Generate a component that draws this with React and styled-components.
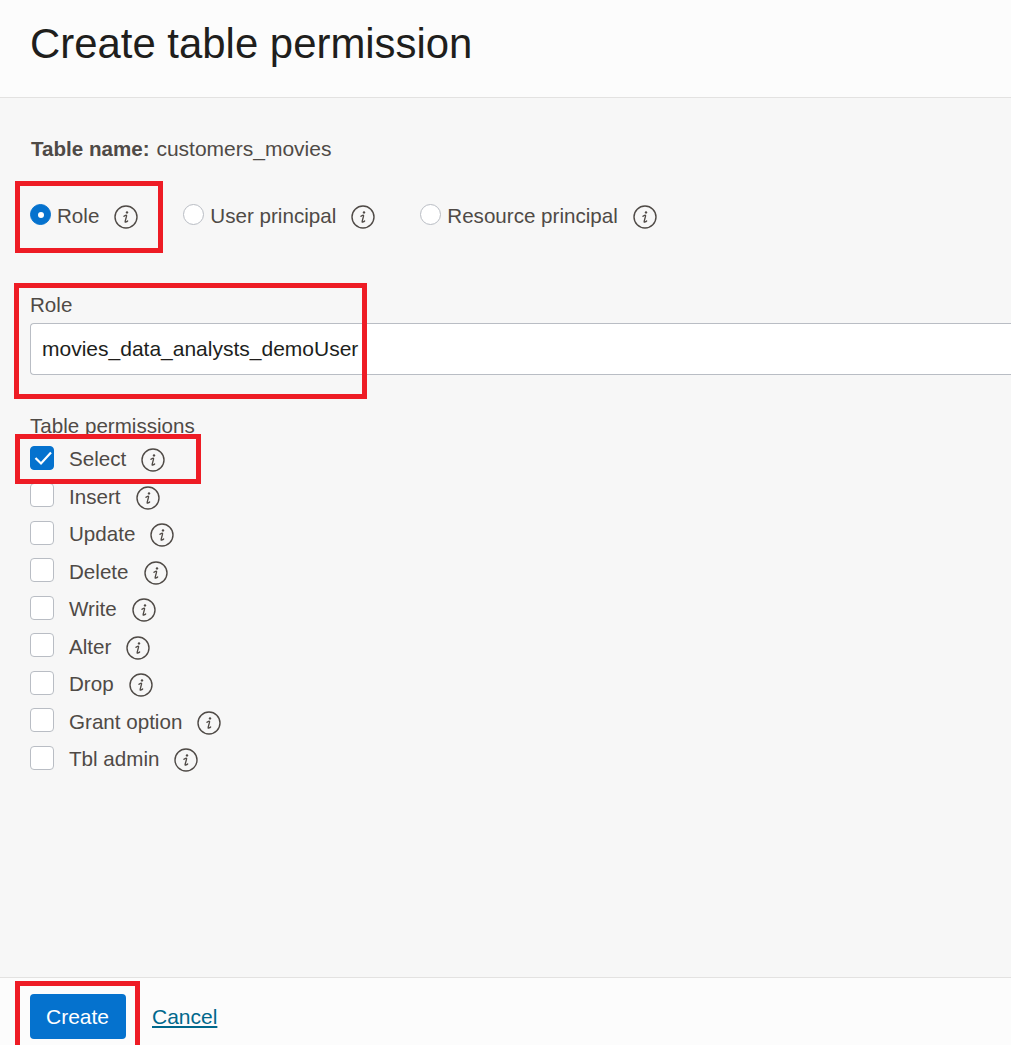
import React from 'react'
import styled, { createGlobalStyle } from 'styled-components'

const GlobalStyle = createGlobalStyle`
  html, body {
    margin: 0;
    padding: 0;
    height: 100%;
    overflow: hidden;
  }
  body {
    font-family: "Liberation Sans", Arial, sans-serif;
    color: #4f4a46;
  }
`

const Page = styled.div`
  position: relative;
  width: 1011px;
  height: 1045px;
  display: flex;
  flex-direction: column;
  background: #f7f7f7;
  overflow: hidden;
`

const Header = styled.header`
  flex: none;
  display: flex;
  align-items: center;
  padding: 0 30px 9px;
  height: 88px;
  background: #fcfcfc;
  border-bottom: 1px solid #e3e2e1;
`

const Title = styled.h1`
  margin: 0;
  font-size: 41.9px;
  font-weight: 400;
  color: #201e1c;
`

const Body = styled.main`
  flex: 1;
  padding: 39px 0 0 30px;
  font-size: 20.6px;
  line-height: 24px;
`

const TableName = styled.div`
  height: 24px;
  margin-bottom: 43px;
  padding-left: 1px;
`

const TableValue = styled.span`
  font-size: 21px;
  margin-left: 1px;
`

const RadioRow = styled.div`
  display: flex;
  height: 24px;
  margin-bottom: 65px;
`

const RadioOption = styled.label`
  display: flex;
  align-items: center;
  margin-right: ${p => p.$gap}px;
`

const Radio = styled.span`
  width: 21px;
  height: 21px;
  box-sizing: border-box;
  border-radius: 50%;
  margin: -3px 6px 0 0;
  display: flex;
  align-items: center;
  justify-content: center;
  background: ${p => (p.$checked ? '#0572ce' : '#fff')};
  border: 1px solid ${p => (p.$checked ? '#0572ce' : '#b9bdc4')};

  &::after {
    content: "";
    display: ${p => (p.$checked ? 'block' : 'none')};
    width: 6px;
    height: 6px;
    border-radius: 50%;
    background: #fff;
  }
`

const InfoIcon = styled.svg`
  width: 24px;
  height: 24px;
  flex: none;
  margin: 2px 0 0 15px;
`

const FieldLabel = styled.div`
  height: 24px;
  margin-bottom: 6px;
`

const RoleInput = styled.div`
  height: 52px;
  box-sizing: border-box;
  margin-bottom: 40px;
  padding: 0 11px;
  display: flex;
  align-items: center;
  background: #fff;
  border: 1px solid #b9bdc4;
  border-right: none;
  border-radius: 4px 0 0 4px;
  color: #201e1c;
  font-size: 21px;
`

const GroupLabel = styled.div`
  height: 25.4px;
  line-height: 22px;
`

const CheckList = styled.div`
  display: flex;
  flex-direction: column;
`

const CheckRow = styled.label`
  display: flex;
  align-items: center;
  height: 37.5px;
`

const Box = styled.span`
  width: 24px;
  height: 24px;
  box-sizing: border-box;
  border-radius: 4px;
  margin: -2.4px 15px 0 0;
  display: flex;
  align-items: center;
  justify-content: center;
  background: ${p => (p.$checked ? '#0572ce' : '#fff')};
  border: 1px solid ${p => (p.$checked ? '#0572ce' : '#b9bdc4')};
`

const Footer = styled.footer`
  height: 68px;
  flex: none;
  display: flex;
  align-items: flex-start;
  padding: 16px 0 0 30px;
  box-sizing: border-box;
  background: #fcfcfc;
  border-top: 1px solid #e3e2e1;
  font-size: 21px;
`

const CreateButton = styled.button`
  width: 96px;
  height: 45px;
  border: none;
  border-radius: 4px;
  padding: 0 1px 0 0;
  background: #0572ce;
  color: #fff;
  font: inherit;
`

const CancelLink = styled.a`
  margin-left: 26px;
  line-height: 45px;
  color: #00688c;
  text-decoration: underline;
`

const Highlight = styled.div`
  position: absolute;
  box-sizing: border-box;
  border: 5px solid #ee1c25;
  left: ${p => p.$x}px;
  top: ${p => p.$y}px;
  width: ${p => p.$w}px;
  height: ${p => p.$h}px;
`

const Info = () => (
  <InfoIcon viewBox="0 0 24 24" fill="none">
    <circle cx="12" cy="12" r="11" stroke="#4f4a46" strokeWidth="1.4" />
    <circle cx="13" cy="7.4" r="1.2" fill="#4f4a46" />
    <path
      d="M10 11.3c1-.9 2.3-1.2 2.6-.8.3.4-1.8 5.9-1.5 6.4.3.5 1.5 0 2.5-1"
      stroke="#4f4a46"
      strokeWidth="1.4"
      strokeLinecap="round"
    />
  </InfoIcon>
)

const permissions = [
  { name: 'Select', checked: true },
  { name: 'Insert' },
  { name: 'Update' },
  { name: 'Delete' },
  { name: 'Write' },
  { name: 'Alter' },
  { name: 'Drop' },
  { name: 'Grant option' },
  { name: 'Tbl admin' },
]

const App = () => {
  return (
    <Page>
      <GlobalStyle />
      <Header>
        <Title>Create table permission</Title>
      </Header>
      <Body>
        <TableName>
          <b>Table name:</b> <TableValue>customers_movies</TableValue>
        </TableName>
        <RadioRow>
          <RadioOption $gap={45}>
            <Radio $checked />
            Role
            <Info />
          </RadioOption>
          <RadioOption $gap={45}>
            <Radio />
            User principal
            <Info />
          </RadioOption>
          <RadioOption>
            <Radio />
            Resource principal
            <Info />
          </RadioOption>
        </RadioRow>
        <FieldLabel>Role</FieldLabel>
        <RoleInput>movies_data_analysts_demoUser</RoleInput>
        <GroupLabel>Table permissions</GroupLabel>
        <CheckList>
          {permissions.map(item => (
            <CheckRow key={item.name}>
              <Box $checked={item.checked}>
                {item.checked && (
                  <svg width="22" height="22" viewBox="0 0 22 22" fill="none">
                    <path d="M4.5 11l5.5 5.5L20 5.5" stroke="#fff" strokeWidth="2.2" />
                  </svg>
                )}
              </Box>
              {item.name}
              <Info />
            </CheckRow>
          ))}
        </CheckList>
      </Body>
      <Footer>
        <CreateButton>Create</CreateButton>
        <CancelLink href="#">Cancel</CancelLink>
      </Footer>
      <Highlight $x={15} $y={181} $w={148} $h={72} />
      <Highlight $x={14} $y={283} $w={353} $h={116} />
      <Highlight $x={15} $y={434} $w={186} $h={50} />
      <Highlight $x={15} $y={981} $w={125} $h={70} />
    </Page>
  )
}

export default App
